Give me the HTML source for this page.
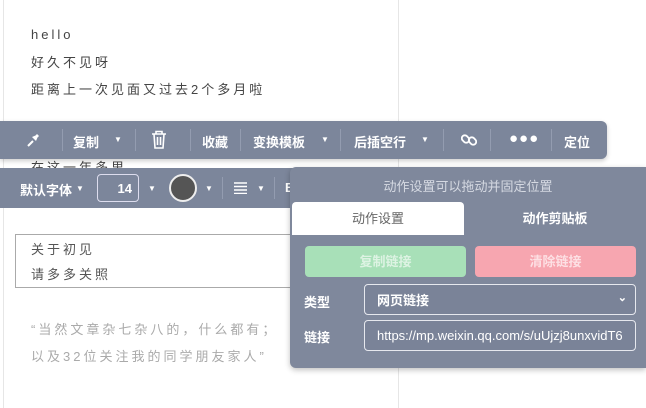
<!DOCTYPE html>
<html><head><meta charset="utf-8"><style>
*{margin:0;padding:0;box-sizing:border-box}
body{width:646px;height:402px;overflow:hidden;background:#fff;position:relative;font-family:"Liberation Sans","Noto Sans CJK SC",sans-serif}
.a{position:absolute;white-space:nowrap}
.page{left:3px;top:-2px;width:396px;height:410px;border-left:1px solid #e6e6e6;border-right:1px solid #e6e6e6}
.t{color:#444;font-size:13px;letter-spacing:3px;left:31px}
.bar{background:#7c869b;color:#fff;font-size:13px;font-weight:bold}
.bar>*{position:absolute;white-space:nowrap}
.sep{width:1px;height:22px;background:#939cb0;top:8px}
.caret{font-size:8px}
.panel{left:290px;top:167px;width:356px;height:201px;background:#7f889c;border-radius:6px 0 0 6px;box-shadow:0 2px 6px rgba(0,0,0,.25)}
.field{position:absolute;border:1px solid #e6e8ee;border-radius:4px;background:#7a8398;color:#fff;font-size:13px;display:flex;align-items:center;padding-left:12px;white-space:nowrap;overflow:hidden}
</style></head><body>
<div class="a page"></div>
<div class="a t" style="top:27px">hello</div>
<div class="a t" style="top:52px">好久不见呀</div>
<div class="a t" style="top:79px">距离上一次见面又过去2个多月啦</div>
<div class="a t" style="top:157px">在这一年多里</div>
<div class="a" style="left:15px;top:234px;width:377px;height:54px;border:1px solid #aaa"></div>
<div class="a t" style="top:239px;color:#555">关于初见</div>
<div class="a t" style="top:264px;color:#555">请多多关照</div>
<div class="a t" style="top:319px;color:#aaa">“当然文章杂七杂八的，什么都有；</div>
<div class="a t" style="top:346px;color:#aaa">以及32位关注我的同学朋友家人”</div>

<div class="a bar" style="left:0;top:121px;width:607px;height:38px;border-radius:0 6px 6px 0;box-shadow:0 2px 5px rgba(0,0,0,.2)">
<svg style="left:25px;top:11px" width="16" height="16" viewBox="0 0 16 16"><path d="M3 14L8 9" stroke="#fff" stroke-width="2"/><path d="M7 5l4 4 1.5-3.5L14 4 12 2 10.5 3.5z" fill="#fff"/></svg>
<div class="sep" style="left:62px"></div>
<span style="left:73px;top:11px">复制</span><span class="caret" style="left:114px;top:14px">▼</span>
<div class="sep" style="left:135px"></div>
<svg style="left:151px;top:9px" width="16" height="19" viewBox="0 0 16 19" fill="none" stroke="#fff" stroke-width="1.6"><path d="M1 4h14M5 4V1.5h6V4M3 4l1 14h8l1-14M6.5 7v8M9.5 7v8"/></svg>
<div class="sep" style="left:190px"></div>
<span style="left:202px;top:11px">收藏</span>
<div class="sep" style="left:240px"></div>
<span style="left:253px;top:11px">变换模板</span><span class="caret" style="left:321px;top:14px">▼</span>
<div class="sep" style="left:340px"></div>
<span style="left:354px;top:11px">后插空行</span><span class="caret" style="left:421px;top:14px">▼</span>
<div class="sep" style="left:443px"></div>
<svg style="left:461px;top:11px" width="16" height="16" viewBox="0 0 16 16" fill="none" stroke="#fff" stroke-width="1.8"><rect x="1.5" y="3" width="6" height="8" rx="3" transform="rotate(-45 4.5 7)"/><rect x="8.5" y="5" width="6" height="8" rx="3" transform="rotate(-45 11.5 9)"/></svg>
<div class="sep" style="left:490px"></div>
<span style="left:509px;top:9px;font-size:15px;letter-spacing:1px">●●●</span>
<div class="sep" style="left:551px"></div>
<span style="left:564px;top:11px">定位</span>
</div>

<div class="a bar" style="left:0;top:168px;width:300px;height:40px">
<span style="left:20px;top:12px">默认字体</span><span class="caret" style="left:76px;top:16px">▼</span>
<div style="left:97px;top:6px;width:42px;height:28px;border:1px solid #dde;border-radius:4px;text-align:right;padding:6px 6px 0 0">14</div>
<span class="caret" style="left:148px;top:16px">▼</span>
<div style="left:169px;top:6px;width:28px;height:28px;border-radius:50%;background:#555;border:2px solid #eee"></div>
<span class="caret" style="left:205px;top:16px">▼</span>
<div class="sep" style="left:222px;top:9px"></div>
<svg style="left:234px;top:14px" width="13" height="12" viewBox="0 0 13 12"><path d="M0 1h13M0 4.5h13M0 8h13M0 11.5h13" stroke="#fff" stroke-width="1.6"/></svg>
<span class="caret" style="left:257px;top:16px">▼</span>
<div class="sep" style="left:274px;top:9px"></div>
<span style="left:285px;top:12px">B</span>
</div>

<div class="a panel">
<div class="a" style="left:0;top:9px;width:356px;text-align:center;color:#d5d9e2;font-size:13px">动作设置可以拖动并固定位置</div>
<div class="a" style="left:2px;top:35px;width:172px;height:33px;background:#fff;border-radius:4px 4px 0 0;color:#666;font-size:13px;text-align:center;line-height:33px">动作设置</div>
<div class="a" style="left:174px;top:35px;width:182px;height:33px;color:#fff;font-size:13px;font-weight:bold;text-align:center;line-height:33px">动作剪贴板</div>
<div class="a" style="left:15px;top:79px;width:161px;height:31px;background:#a8e0b8;border-radius:4px;color:#ddf3e3;font-size:13px;text-align:center;line-height:31px;font-weight:bold">复制链接</div>
<div class="a" style="left:185px;top:79px;width:161px;height:31px;background:#f7a6b0;border-radius:4px;color:#fde0e4;font-size:13px;text-align:center;line-height:31px;font-weight:bold">清除链接</div>
<div class="a" style="left:14px;top:125px;color:#fff;font-size:13px;font-weight:bold">类型</div>
<div class="field" style="left:74px;top:117px;width:272px;height:31px;font-weight:bold">网页链接<span style="position:absolute;right:8px;top:6px;font-size:11px">⌄</span></div>
<div class="a" style="left:14px;top:160px;color:#fff;font-size:13px;font-weight:bold">链接</div>
<div class="field" style="left:74px;top:153px;width:272px;height:31px">https://mp.weixin.qq.com/s/uUjzj8unxvidT6</div>
</div>
</body></html>
